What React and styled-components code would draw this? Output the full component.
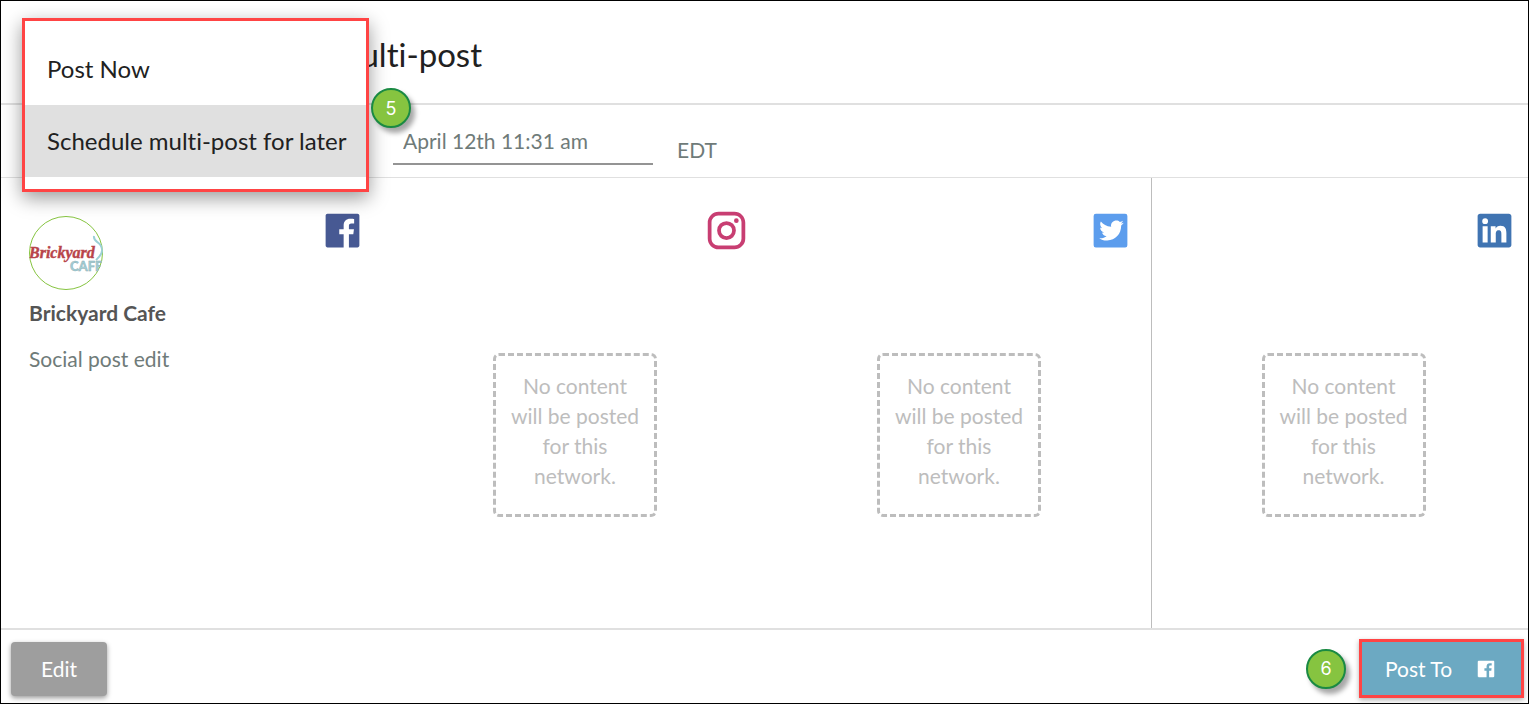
import React from 'react'
import styled, { createGlobalStyle } from 'styled-components'

const GlobalStyle = createGlobalStyle`
    * {
        box-sizing: border-box;
    }
    body {
        margin: 0;
        background: #fff;
        font-family: Lato, "Liberation Sans", sans-serif;
        font-size: 21px;
        font-variant-ligatures: none;
        color: #6f7b79;
    }
`

const Page = styled.div`
    position: relative;
    display: flex;
    flex-direction: column;
    min-height: 100vh;
    border: 1px solid #000;
    overflow: hidden;
`

const Header = styled.header`
    display: flex;
    align-items: center;
    height: 104px;
    padding: 4px 24px 0;
    border-bottom: 2px solid #e0e0e0;
`

const Title = styled.h1`
    margin: 0;
    width: 457px;
    text-align: right;
    font-size: 33px;
    line-height: 40px;
    font-weight: 400;
    color: #212121;
    white-space: nowrap;
`

const ScheduleBar = styled.form`
    display: flex;
    align-items: flex-start;
    gap: 24px;
    height: 73px;
    padding: 14px 24px 0 392px;
    border-bottom: 1px solid #e0e0e0;
`

const DateInput = styled.input`
    width: 260px;
    height: 46px;
    padding: 0 10px 2px;
    border: 0;
    border-bottom: 2px solid #949494;
    background: transparent;
    font: inherit;
    color: inherit;
    outline: none;
`

const Zone = styled.span`
    line-height: 28px;
    margin-top: 17px;
`

const Networks = styled.main`
    flex: 1;
    display: grid;
    grid-template-columns: repeat(4, 1fr);
    /* the row runs a little past both sides of the page */
    margin: 0 -7px 0 -2px;
`

const Network = styled.section`
    display: flex;
    flex-direction: column;
    padding: 30px 18px 0;
    border-left: ${props => props.$divided ? '1px solid #bdbdbd' : '0'};
`

const Profile = styled(Network)`
    padding-left: 30px;
`

const NetworkTop = styled.div`
    display: flex;
    justify-content: space-between;
    align-items: flex-start;
    height: 90px;
`

const NetworkIcon = styled.svg`
    width: 45px;
    height: 45px;
    margin-left: auto;
    fill: ${props => props.$color};
`

const Avatar = styled.svg`
    width: 74px;
    height: 74px;
    margin-top: 8px;
`

const Name = styled.h2`
    margin: 0;
    font-size: 21px;
    line-height: 30px;
    font-weight: 700;
    color: #555;
`

const PostText = styled.p`
    margin: 16px 0 0;
    line-height: 30px;
`

const EmptyBox = styled.p`
    align-self: center;
    width: 164px;
    height: 164px;
    margin: 55px 0 0;
    padding: 15px 10px;
    border: 3px dashed #bdbdbd;
    border-radius: 6px;
    text-align: center;
    line-height: 30px;
    color: #bdbdbd;
`

const Footer = styled.footer`
    display: flex;
    align-items: center;
    justify-content: space-between;
    height: 75px;
    padding: 4px 4px 0 10px;
    border-top: 2px solid #e0e0e0;
`

const FooterRight = styled.div`
    display: flex;
    align-items: center;
    gap: 13px;
`

const EditButton = styled.button`
    width: 96px;
    height: 54px;
    padding: 0;
    border: 0;
    border-radius: 4px;
    background: #9e9e9e;
    box-shadow: 0 2px 5px rgba(0, 0, 0, 0.4);
    font: inherit;
    color: #fff;
`

const PostButton = styled.button`
    display: flex;
    align-items: center;
    gap: 23px;
    width: 165px;
    height: 59px;
    padding: 0 23px;
    border: 3px solid #ff4444;
    background: #6ca9c2;
    box-shadow: 0 2px 5px rgba(0, 0, 0, 0.3);
    font: inherit;
    color: #fff;
    white-space: nowrap;

    svg {
        width: 22px;
        height: 22px;
        fill: #fff;
    }
`

const Step = styled.span`
    display: flex;
    align-items: center;
    justify-content: center;
    width: 40px;
    height: 40px;
    border: 2px solid #1a8a43;
    border-radius: 50%;
    background: #86c440;
    box-shadow: 4px 5px 5px rgba(0, 0, 0, 0.35);
    font-family: Inter, "Liberation Sans", sans-serif;
    font-size: 18px;
    color: #fff;
`

const Menu = styled.div`
    position: absolute;
    top: 17px;
    left: 21px;
    width: 347px;
    padding: 12px 0;
    border: 3px solid #ff4444;
    background: #fff;
    box-shadow: 0 6px 18px rgba(0, 0, 0, 0.4);
`

const MenuItem = styled.button`
    display: block;
    width: 100%;
    height: 72px;
    padding: 0 16px 2px 22px;
    border: 0;
    background: ${props => props.$active ? '#e0e0e0' : '#fff'};
    font: inherit;
    font-size: 24px;
    text-align: left;
    color: #212121;
    white-space: nowrap;
`

const MenuStep = styled(Step)`
    position: absolute;
    top: 67px;
    left: 346px;
`

const icons = {
    facebook: {
        viewBox: '-4 -4 32 32',
        path: 'M22.676 0H1.324C.593 0 0 .593 0 1.324v21.352C0 23.408.593 24 1.324 24h11.494v-9.294H9.689v-3.621h3.129V8.41c0-3.099 1.894-4.785 4.659-4.785 1.325 0 2.464.097 2.796.141v3.24h-1.921c-1.5 0-1.792.721-1.792 1.771v2.311h3.584l-.465 3.63H16.56V24h6.115c.733 0 1.325-.592 1.325-1.324V1.324C24 .593 23.408 0 22.676 0',
    },
    instagram: {
        viewBox: '0 0 24 24',
        path: 'M7.8 2H16.2C19.4 2 22 4.6 22 7.8V16.2A5.8 5.8 0 0 1 16.2 22H7.8C4.6 22 2 19.4 2 16.2V7.8A5.8 5.8 0 0 1 7.8 2M7.6 4A3.6 3.6 0 0 0 4 7.6V16.4C4 18.39 5.61 20 7.6 20H16.4A3.6 3.6 0 0 0 20 16.4V7.6C20 5.61 18.39 4 16.4 4H7.6M17.25 5.5A1.25 1.25 0 0 1 18.5 6.75A1.25 1.25 0 0 1 17.25 8A1.25 1.25 0 0 1 16 6.75A1.25 1.25 0 0 1 17.25 5.5M12 7A5 5 0 0 1 17 12A5 5 0 0 1 12 17A5 5 0 0 1 7 12A5 5 0 0 1 12 7M12 9A3 3 0 0 0 9 12A3 3 0 0 0 12 15A3 3 0 0 0 15 12A3 3 0 0 0 12 9Z',
    },
    twitter: {
        viewBox: '0 0 24 24',
        path: 'M4.2 3H19.8A1.2 1.2 0 0 1 21 4.2V19.8A1.2 1.2 0 0 1 19.8 21H4.2A1.2 1.2 0 0 1 3 19.8V4.2A1.2 1.2 0 0 1 4.2 3M17.71 9.33C18.19 8.93 18.75 8.45 19 7.92C18.59 8.13 18.1 8.26 17.56 8.33C18.06 7.97 18.47 7.5 18.68 6.86C18.16 7.14 17.63 7.38 16.97 7.5C15.42 5.63 11.71 7.15 12.37 9.95C9.76 9.79 8.17 8.61 6.85 7.16C6.1 8.38 6.75 10.23 7.64 10.74C7.18 10.71 6.83 10.57 6.5 10.41C6.54 11.95 7.39 12.69 8.58 13.09C8.22 13.16 7.82 13.18 7.44 13.12C7.77 14.19 8.58 14.86 9.9 15C9 15.76 7.34 16.29 6 16.08C7.15 16.81 8.46 17.39 10.28 17.31C14.69 17.11 17.64 13.95 17.71 9.33Z',
    },
    linkedin: {
        viewBox: '-4 -4 32 32',
        path: 'M20.447 20.452h-3.554v-5.569c0-1.328-.027-3.037-1.852-3.037-1.853 0-2.136 1.445-2.136 2.939v5.667H9.351V9h3.414v1.561h.046c.477-.9 1.637-1.85 3.37-1.85 3.601 0 4.267 2.37 4.267 5.455v6.286zM5.337 7.433a2.062 2.062 0 0 1-2.063-2.065 2.064 2.064 0 1 1 2.063 2.065zm1.782 13.019H3.555V9h3.564v11.452zM22.225 0H1.771C.792 0 0 .774 0 1.729v20.542C0 23.227.792 24 1.771 24h20.451C23.2 24 24 23.227 24 22.271V1.729C24 .774 23.2 0 22.222 0h.003z',
    },
}

const networks = [
    { id: 'instagram', color: '#c83e72' },
    { id: 'twitter', color: '#5c9ded' },
    { id: 'linkedin', color: '#4074b2', divided: true },
]

const Icon = ({ id, color }) => (
    <NetworkIcon viewBox={icons[id].viewBox} $color={color} role="img" aria-label={id}>
        <path fillRule="evenodd" d={icons[id].path} />
    </NetworkIcon>
)

const CafeLogo = () => (
    <Avatar viewBox="0 0 74 74" role="img" aria-label="Brickyard Cafe logo">
        <clipPath id="logo-clip"><circle cx="37" cy="37" r="37" /></clipPath>
        <circle cx="37" cy="37" r="36.5" fill="#fff" stroke="#86c440" />
        <g clipPath="url(#logo-clip)" fontWeight="900">
            <path d="M65 20C64 27 72 25 73 33C74 38 70 41 67 44" fill="none" stroke="#9bd0d6" strokeWidth="2" />
            <text x="0" y="42" fontFamily="Liberation Serif, serif" fontSize="16" fontStyle="italic" fill="#b8444a" stroke="#b8444a" strokeWidth="0.4">Brickyard</text>
            <text x="41" y="55" fontFamily="Lato, sans-serif" fontSize="13" fill="#a3cfd6" stroke="#8aa9b0" strokeWidth="0.4">CAFE</text>
        </g>
    </Avatar>
)

const App = () => {
    return (
        <>
            <GlobalStyle />
            <Page>
                <Header>
                    <Title>Schedule multi-post</Title>
                </Header>
                <ScheduleBar>
                    <DateInput type="text" aria-label="Post date" defaultValue="April 12th 11:31 am" />
                    <Zone>EDT</Zone>
                </ScheduleBar>

                <Networks>
                    <Profile>
                        <NetworkTop>
                            <CafeLogo />
                            <Icon id="facebook" color="#475993" />
                        </NetworkTop>
                        <Name>Brickyard Cafe</Name>
                        <PostText>Social post edit</PostText>
                    </Profile>
                    {networks.map(network => (
                        <Network key={network.id} $divided={network.divided}>
                            <NetworkTop>
                                <Icon id={network.id} color={network.color} />
                            </NetworkTop>
                            <EmptyBox>No content will be posted for this network.</EmptyBox>
                        </Network>
                    ))}
                </Networks>

                <Footer>
                    <EditButton type="button">Edit</EditButton>
                    <FooterRight>
                        <Step>6</Step>
                        <PostButton type="button">
                            Post To
                            <svg viewBox={icons.facebook.viewBox} aria-hidden="true">
                                <path fillRule="evenodd" d={icons.facebook.path} />
                            </svg>
                        </PostButton>
                    </FooterRight>
                </Footer>

                <Menu>
                    <MenuItem type="button">Post Now</MenuItem>
                    <MenuItem type="button" $active>Schedule multi-post for later</MenuItem>
                    <MenuStep>5</MenuStep>
                </Menu>
            </Page>
        </>
    )
}

export default App
